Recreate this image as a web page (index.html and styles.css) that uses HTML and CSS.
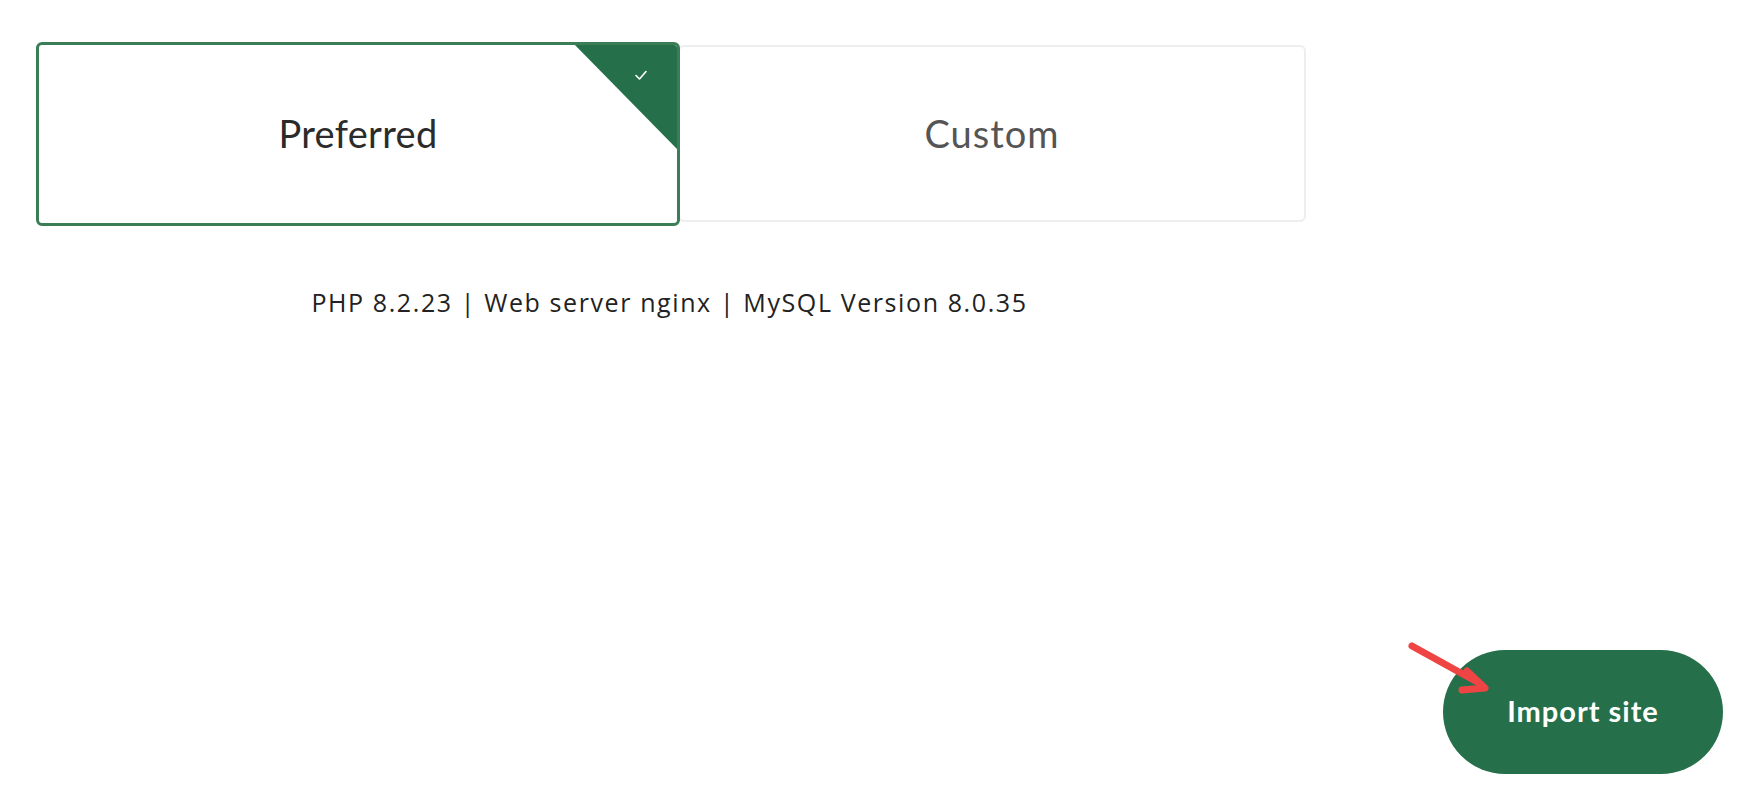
FILE: index.html
```html
<!DOCTYPE html>
<html>
<head>
<meta charset="utf-8">
<link rel="stylesheet" href="styles.css">
</head>
<body>
<div class="page">
  <div class="env">
    <div class="options">
      <div class="option option--selected">
        <span class="option__label">Preferred</span>
        <span class="option__corner">
          <svg class="option__check" width="14" height="12" viewBox="0 0 14 12"><path d="M2 6.5 L5.5 10 L12 2.5" fill="none" stroke="#ffffff" stroke-width="1.6" stroke-linecap="round" stroke-linejoin="round"/></svg>
        </span>
      </div>
      <div class="option option--plain">
        <span class="option__label option__label--muted">Custom</span>
      </div>
    </div>
    <p class="env__info">PHP 8.2.23 | Web server nginx | MySQL Version 8.0.35</p>
  </div>
  <div class="footer">
    <div class="action">
      <svg class="action__arrow" width="90" height="56" viewBox="0 0 90 56">
        <path d="M7 5 L74 42" fill="none" stroke="#ef4444" stroke-width="7" stroke-linecap="round"/>
        <path d="M62 30 L80 47 L57 49" fill="none" stroke="#ef4444" stroke-width="7" stroke-linecap="round" stroke-linejoin="round"/>
      </svg>
      <button class="btn-primary">Import site</button>
    </div>
  </div>
</div>
</body>
</html>
```
FILE: styles.css
```css
* { box-sizing: border-box; }
html, body { margin: 0; padding: 0; background: #ffffff; }
body { font-family: "Lato", "Open Sans", sans-serif; color: #222; }

.page {
  height: 100vh;
  display: flex;
  flex-direction: column;
  padding: 42px 18px 33px 36px;
}

.env { width: 1270px; }

.options {
  display: flex;
  align-items: flex-start;
}

.option {
  position: relative;
  display: flex;
  align-items: center;
  justify-content: center;
  border-radius: 6px;
  background: #fff;
  overflow: hidden;
}

.option--selected {
  width: 644px;
  height: 184px;
  border: 3px solid #3a7d57;
  z-index: 1;
}

.option--plain {
  width: 628px;
  height: 177px;
  margin-top: 3px;
  margin-left: -2px;
  border: 2px solid #eeeeee;
}

.option__label {
  font-size: 38px;
  color: #2b2b2b;
  letter-spacing: 0.3px;
  padding-bottom: 2px;
}
.option__label--muted { color: #555; letter-spacing: 1px; }

.option__corner {
  position: absolute;
  top: -3px;
  right: -3px;
  width: 108px;
  height: 110px;
  background: #25704a;
  clip-path: polygon(0 0, 100% 0, 100% 100%);
}
.option__check {
  position: absolute;
  top: 27px;
  right: 32px;
}

.env__info {
  margin: 59px 0 0;
  text-align: center;
  font-family: "Open Sans", sans-serif;
  font-size: 25px;
  letter-spacing: 1.6px;
  color: #222;
  padding-right: 3px;
}

.footer {
  margin-top: auto;
  display: flex;
  justify-content: flex-end;
}

.action { position: relative; }

.btn-primary {
  width: 280px;
  height: 124px;
  border: none;
  border-radius: 62px;
  background: #25704a;
  color: #fff;
  font-family: "Lato", sans-serif;
  font-weight: 700;
  font-size: 29px;
  letter-spacing: 1px;
  padding: 0 0 4px;
  cursor: pointer;
}

.action__arrow {
  position: absolute;
  left: -38px;
  top: -9px;
}
```
